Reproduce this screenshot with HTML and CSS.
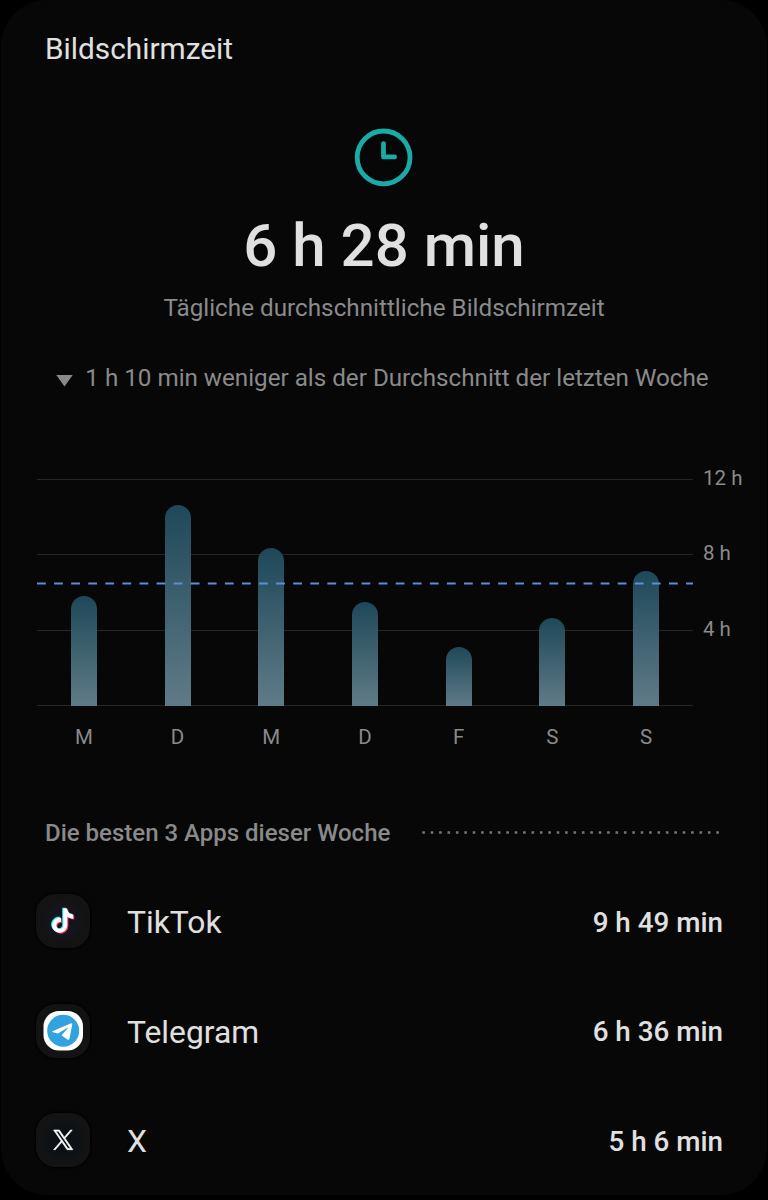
FILE: index.html
```html
<!DOCTYPE html>
<html lang="de">
<head>
  <meta charset="UTF-8">
  <title>Bildschirmzeit</title>
  <link rel="stylesheet" href="styles.css">
</head>
<body>
  <div class="card">
    <h1 class="title">Bildschirmzeit</h1>

    <div class="summary">
      <svg class="clock" width="60" height="60" viewBox="0 0 60 60">
        <circle cx="29.6" cy="30.4" r="26.4"/>
        <path d="M29.5 16.6V29.9H40.6"/>
      </svg>
      <div class="total">6 h 28 min</div>
      <div class="caption">Tägliche durchschnittliche Bildschirmzeit</div>
      <div class="trend">
        <svg width="17" height="12" viewBox="0 0 17 12"><path d="M.3 0H16.7L8.5 11.5z"/></svg>
        <span>1 h 10 min weniger als der Durchschnitt der letzten Woche</span>
      </div>
    </div>

    <div class="chart">
      <div class="plot">
        <div class="grid-lines"><i></i><i></i><i></i><i></i></div>
        <div class="bars">
          <div class="bar" style="height: 110px"></div>
          <div class="bar" style="height: 201px"></div>
          <div class="bar" style="height: 158px"></div>
          <div class="bar" style="height: 104px"></div>
          <div class="bar" style="height: 59px"></div>
          <div class="bar" style="height: 88px"></div>
          <div class="bar" style="height: 135px"></div>
        </div>
        <svg class="average" width="656" height="3"><line x1="0" y1="1.5" x2="656" y2="1.5"/></svg>
      </div>
      <div class="hours">
        <span>12 h</span>
        <span>8 h</span>
        <span>4 h</span>
      </div>
      <div class="days">
        <span>M</span>
        <span>D</span>
        <span>M</span>
        <span>D</span>
        <span>F</span>
        <span>S</span>
        <span>S</span>
      </div>
    </div>

    <div class="section">
      <h2>Die besten 3 Apps dieser Woche</h2>
      <svg class="dots" width="298" height="3"><line x1="0.3" y1="1.5" x2="298" y2="1.5"/></svg>
    </div>

    <div class="apps">
      <div class="app">
        <div class="icon tiktok">
          <svg width="54" height="54" viewBox="0 0 54 54">
            <defs>
              <path id="note" d="M12.525.02c1.31-.02 2.61-.01 3.91-.02.08 1.53.63 3.09 1.75 4.17 1.12 1.11 2.7 1.62 4.24 1.79v4.03c-1.44-.05-2.89-.35-4.2-.97-.57-.26-1.1-.59-1.62-.93-.01 2.92.01 5.84-.02 8.75-.08 1.4-.54 2.79-1.35 3.94-1.31 1.92-3.58 3.17-5.91 3.21-1.43.08-2.86-.31-4.08-1.03-2.02-1.19-3.44-3.37-3.65-5.71-.02-.5-.03-1-.01-1.49.18-1.9 1.12-3.72 2.58-4.96 1.66-1.44 3.98-2.13 6.15-1.72.02 1.48-.04 2.96-.04 4.44-.99-.32-2.15-.23-3.02.37-.63.41-1.11 1.04-1.36 1.75-.21.51-.15 1.07-.14 1.61.24 1.64 1.82 3.02 3.5 2.87 1.12-.01 2.19-.66 2.77-1.61.19-.33.4-.67.41-1.06.1-1.79.06-3.57.07-5.36.01-4.03-.01-8.05.02-12.07z"/>
            </defs>
            <use href="#note" transform="translate(13.6 13.8) scale(1.01)" fill="#25f4ee"/>
            <use href="#note" transform="translate(15.6 15.4) scale(1.01)" fill="#fe2c55"/>
            <use href="#note" transform="translate(14.6 14.6) scale(1.01)" fill="#fff"/>
          </svg>
        </div>
        <span class="name">TikTok</span>
        <span class="time">9 h 49 min</span>
      </div>
      <div class="app">
        <div class="icon">
          <svg width="54" height="54" viewBox="0 0 54 54">
            <rect x="7.5" y="7" width="39.5" height="39.5" rx="15.5" fill="#fff"/>
            <circle cx="27.2" cy="26.8" r="16" fill="#32a3df"/>
            <path d="M16.5 27.2 34.5 19.4Q36.5 18.7 36.2 20.8L33.5 34.6Q33 36.5 31.3 35.5L25.5 31.2 31.8 24.3Q32 23.4 31 23.9L22 29.6 17 28.2Q15.6 27.7 16.5 27.2z" fill="#fff"/>
          </svg>
        </div>
        <span class="name">Telegram</span>
        <span class="time">6 h 36 min</span>
      </div>
      <div class="app">
        <div class="icon x">
          <svg width="54" height="54" viewBox="0 0 54 54">
            <path transform="translate(17.4 17) scale(.82)" fill="#fff" stroke="#fff" stroke-width=".8" d="M14.234 10.162 22.977 0h-2.072l-7.591 8.824L7.251 0H.258l9.168 13.343L.258 24H2.33l8.016-9.318L16.749 24h6.993zm-2.837 3.299-.929-1.329L3.076 1.56h3.182l5.965 8.532.929 1.329 7.754 11.09h-3.182z"/>
          </svg>
        </div>
        <span class="name">X</span>
        <span class="time">5 h 6 min</span>
      </div>
    </div>
  </div>
</body>
</html>
```
FILE: styles.css
```css
body {
  margin: 0;
  background: #000;
  font-family: Roboto, "Liberation Sans", sans-serif;
  color: #e0e0e0;
}

.card {
  box-sizing: border-box;
  width: 766px;
  height: 1195px;
  margin: 0 1px;
  padding-top: 31px;
  background: #070707;
  border-radius: 46px;
  overflow: hidden;
}

svg {
  display: block;
}

.title {
  margin: 0 0 0 44px;
  font-size: 29.8px;
  font-weight: 400;
  line-height: 36px;
}

.summary {
  display: flex;
  flex-direction: column;
  align-items: center;
  padding-top: 60px;
}

.clock {
  fill: none;
  stroke: #1aaaa8;
  stroke-width: 4.8;
  stroke-linecap: round;
  stroke-linejoin: round;
}

.total {
  margin-top: 24px;
  font-size: 60px;
  font-weight: 500;
  line-height: 70px;
}

.caption {
  margin-top: 12px;
  font-size: 24.25px;
  line-height: 30px;
  color: #8a8a8a;
}

.trend {
  display: flex;
  align-items: center;
  gap: 12px;
  margin-top: 40px;
  padding-right: 3px;
  font-size: 24.2px;
  line-height: 30px;
  color: #8a8a8a;
  white-space: nowrap;
}

.trend svg {
  margin-top: 6px;
  fill: #8a8a8a;
}

.chart {
  display: grid;
  grid-template-columns: 656px 1fr;
  column-gap: 10px;
  margin: 86px 0 0 36px;
  font-size: 20.5px;
  color: #8a8a8a;
}

.plot {
  display: grid;
  height: 227px;
}

.plot > * {
  grid-area: 1 / 1;
}

.grid-lines {
  display: flex;
  flex-direction: column;
  justify-content: space-between;
}

.grid-lines i {
  height: 1px;
  background: #262626;
}

.bars {
  display: grid;
  grid-template-columns: repeat(7, 1fr);
  align-items: end;
  justify-items: center;
}

.bar {
  width: 26px;
  border-radius: 13px 13px 0 0;
  background: linear-gradient(#1e4859, #607b87);
}

.average {
  margin-top: 103px;
  stroke: #5b8de0;
  stroke-width: 2;
  stroke-dasharray: 8.8 8.28;
}

.hours {
  display: flex;
  flex-direction: column;
  gap: 51.4px;
  margin-top: -13px;
  line-height: 24px;
}

.days {
  display: grid;
  grid-template-columns: repeat(7, 1fr);
  margin-top: 19px;
  line-height: 24px;
  text-align: center;
}

.section {
  display: flex;
  align-items: center;
  justify-content: space-between;
  margin: 69px 47px 0 44px;
}

.section h2 {
  margin: 0;
  font-size: 24px;
  font-weight: 500;
  line-height: 30px;
  color: #8a8a8a;
}

.dots {
  margin-bottom: 1px;
  stroke: #757575;
  stroke-width: 2.6;
  stroke-dasharray: 2.6 5.8;
}

.apps {
  display: flex;
  flex-direction: column;
  gap: 55.5px;
  margin: 46px 44px 0 35px;
}

.app {
  display: flex;
  align-items: center;
  height: 54px;
}

.icon {
  width: 54px;
  height: 54px;
  border-radius: 20px;
  background: #131313;
  box-shadow: 0 0 2px 1px #000;
}

.icon.tiktok {
  background: radial-gradient(#14141c 40%, #131313 60%);
}

.icon.x {
  background: radial-gradient(#0d1115 40%, #131313 65%);
}

.name {
  flex: 1;
  margin-left: 37px;
  padding-top: 2px;
  font-size: 31.8px;
}

.time {
  padding-top: 2px;
  font-size: 27.8px;
  font-weight: 500;
}
```
